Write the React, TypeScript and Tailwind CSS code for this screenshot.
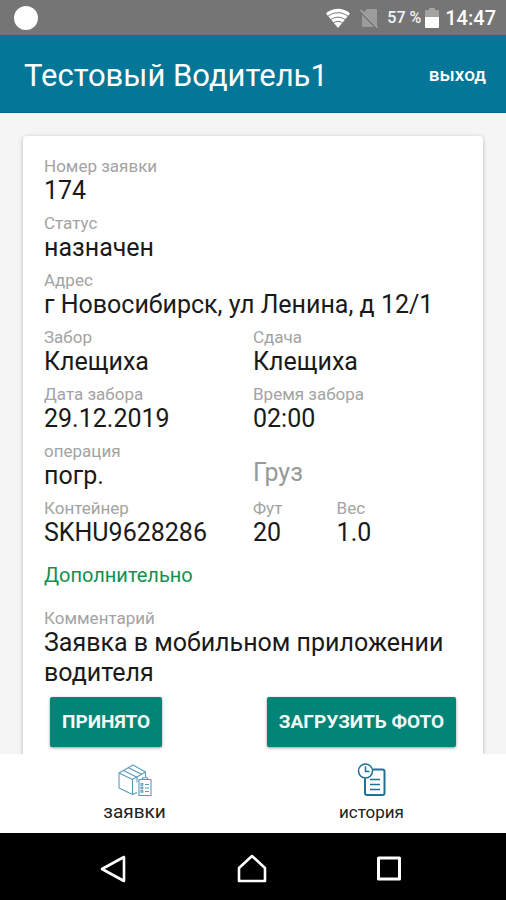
import React, { useState } from 'react';

interface FieldProps {
  label: string;
  value: string;
  className?: string;
}

const Field: React.FC<FieldProps> = ({ label, value, className }) => (
  <dl className={className}>
    <dt className="text-[17px] leading-5 text-[#a3a3a3]">{label}</dt>
    <dd className="text-[25px] leading-[30px] text-[#1a1a1a]">{value}</dd>
  </dl>
);

const StatusBar = () => (
  <div className="flex h-[35px] shrink-0 items-center bg-[#757575] pl-[14px] pr-[10px] text-white">
    <span className="size-6 rounded-full bg-white"></span>
    <div className="ml-auto flex items-center">
      <svg width="26" height="22" viewBox="0 0 26 22" fill="none">
        <path d="M1 6.5C8 .3 18 .3 25 6.5L13 21z" fill="#fff" />
        <path d="M3 9.2c6-4.6 14-4.6 20 0M5.8 12.6c4.4-3.2 10-3.2 14.4 0M8.6 15.8c2.8-1.9 6-1.9 8.8 0" stroke="#757575" strokeWidth="1" />
      </svg>
      <svg className="ml-2" width="20" height="20" viewBox="0 0 20 20">
        <path d="M8 1h9a1 1 0 0 1 1 1v17H3V6z" fill="#9c9c9c" />
        <path d="M2 3.5 17.5 19.5" stroke="#757575" strokeWidth="3" />
        <path d="M1.5 2 18.5 19.5" stroke="#a8a8a8" strokeWidth="1.5" />
      </svg>
      <span className="ml-2 text-base font-medium text-gray-100">57 %</span>
      <svg className="ml-1" width="14" height="21" viewBox="0 0 14 21">
        <path d="M4 1h6v2h3a1 1 0 0 1 1 1v7H0V4a1 1 0 0 1 1-1h3z" fill="#a3a3a3" />
        <path d="M0 10h14v10a1 1 0 0 1-1 1H1a1 1 0 0 1-1-1z" fill="#fff" />
      </svg>
      <span className="ml-[6px] text-[20px] font-medium">14:47</span>
    </div>
  </div>
);

const BoxIcon = () => (
  <svg width="36" height="36" viewBox="0 0 36 36" fill="none" stroke="#5a9bbb" strokeWidth="1.1" strokeLinejoin="round">
    <path d="M20 30.5 15.5 32.5 2 26V11L16 3l12.5 7v5M2 11l13.5 6.5L28.5 10M15.5 17.5v15" />
    <path d="M6.5 8.5 20 15.2v5M11.500 5.700 24.500 12.300" />
    <path d="M22 17.5h12v16H22zM25.5 17.5V15.7h5v1.800" fill="#fff" />
    <path d="M24 21.5h1.800v1.800H24zM24 25h1.800v1.800H24zM24 28.5h1.800v1.800H24zM28 22.500h4M28 26h4M28 29.500h4" />
  </svg>
);

const HistoryIcon = () => (
  <svg width="30" height="36" viewBox="0 0 30 36" fill="none" stroke="#1f7196" strokeWidth="2">
    <path d="M16 7.5h9.5a2 2 0 0 1 2 2V31a2 2 0 0 1-2 2H10a2 2 0 0 1-2-2V16.500" />
    <circle cx="8.5" cy="9" r="7" strokeWidth="1.500" />
    <path d="M8.5 4.5V9.500h4" strokeWidth="1.500" />
    <path d="M13 17.5h10M13 22.500h10M13 27.500h10" strokeWidth="1.500" />
  </svg>
);

const App: React.FC = () => {
  const [tab, setTab] = useState('orders');
  const [cargo, setCargo] = useState('');

  return (
    <div className="flex h-screen flex-col bg-[#f5f5f5] font-[Roboto,sans-serif]">
      <StatusBar />

      <header className="flex h-[78px] shrink-0 items-center justify-between border-b border-[#08658a] bg-[#047799] pl-6 pr-5 pt-1 text-white">
        <h1 className="text-[31px] leading-10">Тестовый Водитель1</h1>
        <button type="button" className="text-[19px] font-medium">выход</button>
      </header>

      <main className="min-h-0 flex-1 overflow-y-auto px-[23px] py-[23px] [scrollbar-width:none]">
        <article className="flex flex-col rounded bg-white px-[21px] pb-6 pt-5 shadow-[0_1px_4px_rgba(0,0,0,0.25)]">
          <div className="flex flex-col gap-[7px]">
            <Field label="Номер заявки" value="174" />
            <Field label="Статус" value="назначен" />
            <Field label="Адрес" value="г Новосибирск, ул Ленина, д 12/1" />
            <div className="grid grid-cols-2">
              <Field label="Забор" value="Клещиха" />
              <Field label="Сдача" value="Клещиха" />
            </div>
            <div className="grid grid-cols-2">
              <Field label="Дата забора" value="29.12.2019" />
              <Field label="Время забора" value="02:00" />
            </div>
            <div className="grid grid-cols-2 items-end">
              <Field label="операция" value="погр." />
              <input
                type="text"
                aria-label="Груз"
                placeholder="Груз"
                value={cargo}
                onChange={(e) => setCargo(e.target.value)}
                className="h-9 min-w-0 text-[25px] text-[#1a1a1a] outline-none placeholder:text-[#999999]"
              />
            </div>
            <div className="grid grid-cols-2">
              <Field label="Контейнер" value="SKHU9628286" />
              <div className="flex">
                <Field className="w-2/5" label="Фут" value="20" />
                <Field label="Вес" value="1.0" />
              </div>
            </div>
          </div>

          <button type="button" className="mb-[18px] mt-3 self-start text-[20px] leading-[30px] text-[#0f9150]">Дополнительно</button>

          <Field label="Комментарий" value="Заявка в мобильном приложении водителя" />

          <div className="mx-[6px] mt-[9px] flex justify-between text-[19px] font-bold text-[#f2faf9]">
            <button type="button" className="h-[50px] rounded-xs bg-[#028576] px-3 shadow-[0_1px_3px_rgba(0,0,0,0.4)]">ПРИНЯТО</button>
            <button type="button" className="h-[50px] rounded-xs bg-[#028576] px-3 shadow-[0_1px_3px_rgba(0,0,0,0.4)]">ЗАГРУЗИТЬ ФОТО</button>
          </div>
        </article>
      </main>

      <nav className="flex h-[79px] shrink-0 justify-around bg-white px-4 text-[17px] leading-5 text-[#222222]">
        <button type="button" aria-pressed={tab === 'orders'} onClick={() => setTab('orders')} className="flex flex-1 flex-col items-center gap-1 pt-2">
          <BoxIcon />
          <span className="text-[19px]">заявки</span>
        </button>
        <button type="button" aria-pressed={tab === 'history'} onClick={() => setTab('history')} className="flex flex-1 flex-col items-center gap-1 pt-2">
          <HistoryIcon />
          <span>история</span>
        </button>
      </nav>

      <div className="flex h-[67px] shrink-0 items-center justify-between bg-black px-[100px] pt-1">
        <button type="button" aria-label="Назад">
          <svg width="27" height="30" viewBox="0 0 27 30" fill="none" stroke="#fff" strokeWidth="2.6" strokeLinejoin="round">
            <path d="M24 3v24L2 15z" />
          </svg>
        </button>
        <button type="button" aria-label="Домой">
          <svg width="30" height="30" viewBox="0 0 30 30" fill="none" stroke="#fff" strokeWidth="2.6" strokeLinejoin="round">
            <path d="M15 2 28 14v13H2V14z" />
          </svg>
        </button>
        <button type="button" aria-label="Недавние">
          <svg width="30" height="30" viewBox="0 0 30 30" fill="none" stroke="#fff" strokeWidth="3" strokeLinejoin="round">
            <path d="M2.500 4h21v21h-21z" />
          </svg>
        </button>
      </div>
    </div>
  );
};

export default App;
